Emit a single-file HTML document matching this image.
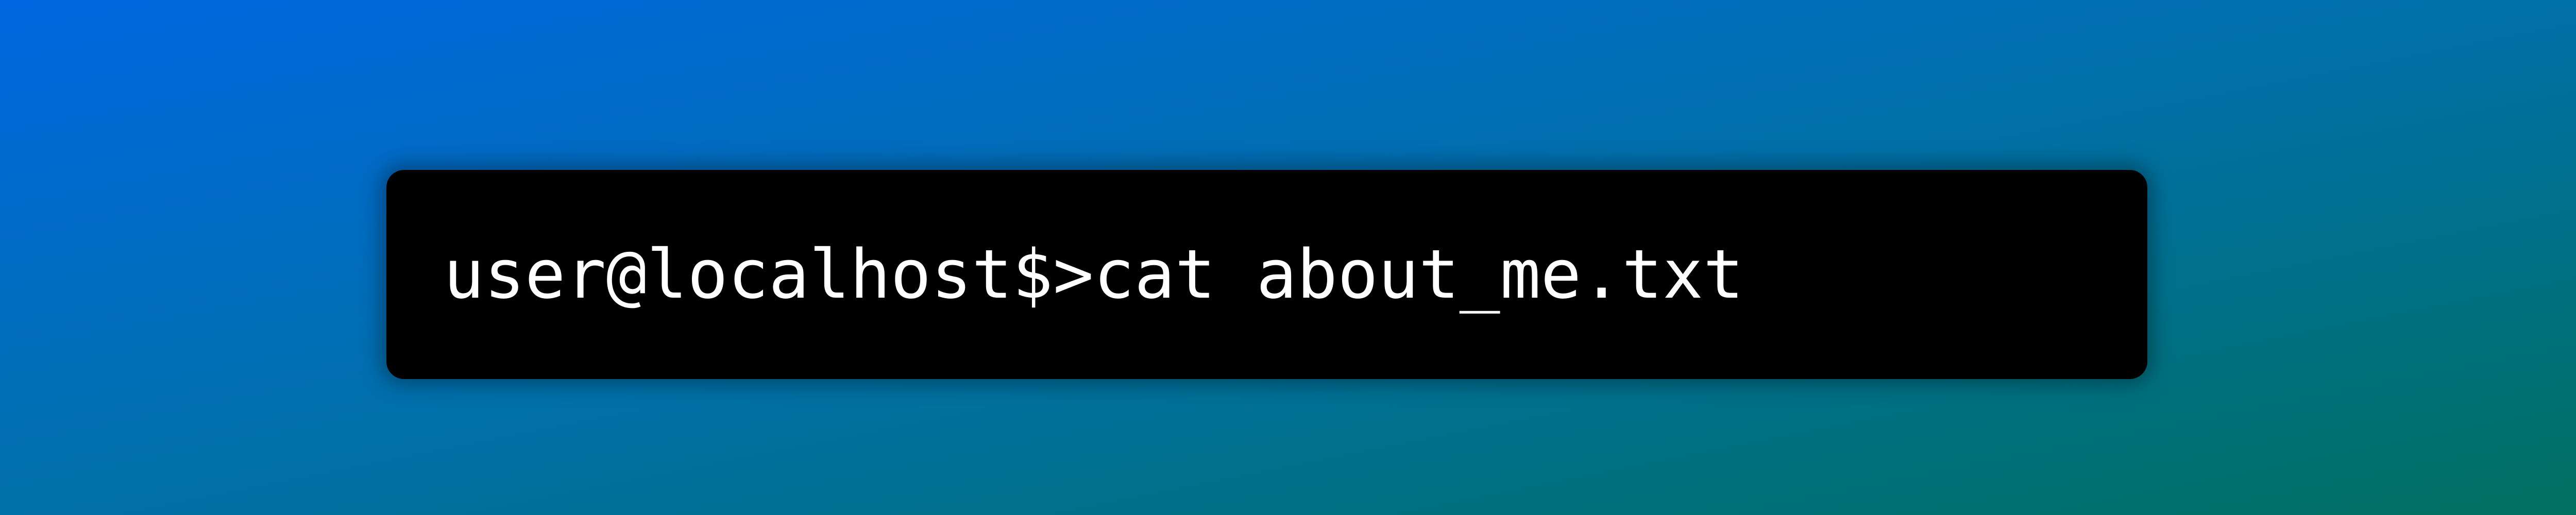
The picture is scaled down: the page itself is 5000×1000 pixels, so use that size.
<!DOCTYPE html>
<html><head><style>
html,body{margin:0;padding:0;}
body{width:5000px;height:1000px;overflow:hidden;background:linear-gradient(to bottom right,#0066e0 0%,#0070a8 50%,#007060 100%);position:relative;}
.box{position:absolute;left:750px;top:330px;width:3418px;height:406px;background:#000;border-radius:34px;box-shadow:0 0 40px 10px rgba(0,0,0,0.35);}
.t{position:absolute;left:111px;top:0;font-family:"DejaVu Sans Mono","Liberation Mono",monospace;font-size:131px;color:#fff;white-space:pre;line-height:406px;height:406px;}
</style></head><body>
<div class="box"><div class="t">user@localhost$&gt;cat about_me.txt</div></div>
</body></html>
